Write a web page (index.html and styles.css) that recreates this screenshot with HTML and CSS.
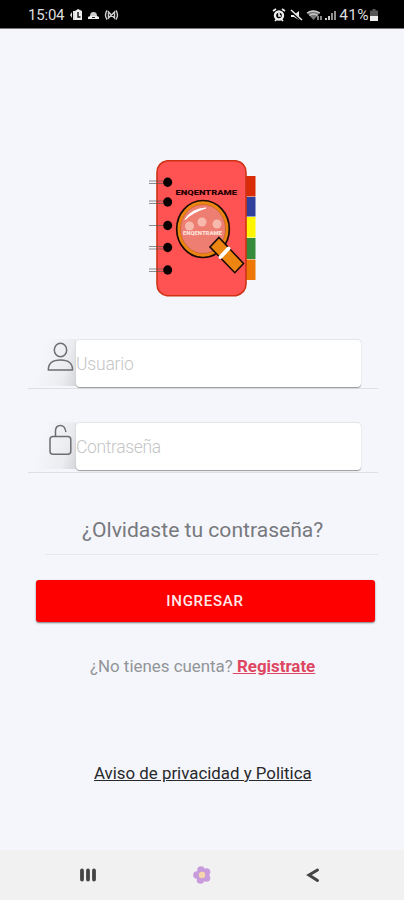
FILE: index.html
```html
<!DOCTYPE html>
<html lang="es">
<head>
<meta charset="utf-8">
<title>Enqentrame</title>
<link rel="stylesheet" href="styles.css">
</head>
<body>
<header class="status">
  <div class="status-left">
    <span class="clock">15:04</span>
    <svg class="status-icons-left" width="50" height="14" viewBox="0 0 50 14">
      <path d="M0 7l2-3v6zM3 3h2v9H3z" fill="#ddd"/>
      <path d="M5 3l3-2 4 2v9H5z" fill="#eee"/>
      <path d="M8 4v5h2.500" fill="none" stroke="#111" stroke-width="1.400"/>
      <path d="M18 11h11V9l-2-1h-7l-2 1z" fill="#eee"/>
      <path d="M20 8a3.500 4 0 0 1 7 0z" fill="#ccc"/>
      <path d="M22 9.500h3" stroke="#222"/>
      <path d="M37 2.500q-3 4.500 0 9M46 2.500q3 4.500 0 9M38.500 4v6l6-6v6z" fill="none" stroke="#ccc" stroke-width="1.400"/>
    </svg>
  </div>
  <div class="status-right">
    <svg width="64" height="14" viewBox="0 0 64 14">
      <circle cx="7" cy="7.500" r="4" fill="none" stroke="#eee" stroke-width="2.400"/>
      <path d="M1 3l3-2M10 1l3 2M3 13l2-2M9 11l2 2M7 5v3h2" stroke="#eee" stroke-width="1.700" fill="none"/>
      <path d="M19 7h3l5-4v9l-5-3h-3z" fill="#eee"/>
      <path d="M18 2l12 11" stroke="#000" stroke-width="2.500"/><path d="M19 2l11 10" stroke="#eee" stroke-width="1.500"/>
      <path d="M35 5q6-5 13 0l-6.500 7z" fill="#777"/>
      <path d="M35 5q6-4 13 0M37.500 7.500q4-3 8 0" fill="none" stroke="#ccc" stroke-width="1.300"/>
      <path d="M46 8v4M49 8v4" stroke="#ccc" stroke-width="1.300"/>
      <path d="M54 12v-2M57 12V8" stroke="#eee" stroke-width="1.700"/><path d="M60 12V5M63 12V3" stroke="#aaa" stroke-width="1.700"/>
    </svg>
    <span class="percent">41%</span>
    <svg width="8" height="12" viewBox="0 0 8 12"><path d="M2.500 0h3v1.500H8V12H0V1.500h2.500z" fill="#555"/><path d="M0 7h8v5H0z" fill="#eee"/></svg>
  </div>
</header>
<main class="screen">
  <svg class="logo" width="125" height="155" viewBox="140 150 125 155">
    <g>
      <path d="M244 176h11.500v20.500H244z" fill="#d92b06"/>
      <path d="M244 197h11.500v19.500H244z" fill="#30409d"/>
      <path d="M244 217h11.500v20.500H244z" fill="#fff500"/>
      <path d="M244 238h11.500v21H244z" fill="#368a3b"/>
      <path d="M244 259.500h11.500V280H244z" fill="#ed7808"/>
    </g>
    <path d="M167 160.700h69q10 2 10 12v111q0 9-10 12h-69q-10-2-10-12v-111q0-10 10-12z" fill="#ff5353" stroke="#cf3215" stroke-width="1.600"/>
    <path d="M149 181h16M149 183.500h16M149 201h16M149 203.500h16M149 225.500h16M149 246.500h16M149 249h16M149 269h16M149 271.500h16" stroke="#555" stroke-opacity=".65" stroke-width="1"/>
    <g fill="#080000"><ellipse cx="167.700" cy="182.300" rx="4.500" ry="4.700"/><ellipse cx="167.700" cy="202" rx="4.500" ry="4.700"/><ellipse cx="167.700" cy="225.500" rx="4.500" ry="4.700"/><ellipse cx="167.700" cy="247.500" rx="4.500" ry="4.700"/><ellipse cx="167.700" cy="270" rx="4.500" ry="4.700"/></g>
    <text class="logo-title" x="175.500" y="195" textLength="61.500" lengthAdjust="spacingAndGlyphs">ENQENTRAME</text>
    <ellipse cx="203" cy="229" rx="26.300" ry="28.500" fill="#ed8611" stroke="#1c0b05" stroke-width="1.700"/>
    <ellipse cx="203" cy="229" rx="22.500" ry="24.500" fill="#ee7d72" stroke="#b85a20" stroke-width=".6"/>
    <g fill="#f8b9ad"><circle cx="189.500" cy="226" r="4.500"/><circle cx="202" cy="222" r="4.500"/><circle cx="217" cy="224" r="4.500"/></g>
    <text class="logo-caption" x="183" y="234.500" textLength="39" lengthAdjust="spacingAndGlyphs">ENQENTRAME</text>
    <path d="M185 219.500Q191 209 206 208Q193 212 185 219.500z" fill="#fff" stroke="#fff" stroke-width="1"/>
    <path d="M219 237.500l24.500 26-8.700 9.200L210 247z" fill="#ed8611" stroke="#1c0b05" stroke-width="1.600"/>
    <path d="M228.500 248.500l-8 8.500" stroke="#fff" stroke-width="4" stroke-linecap="round"/>
  </svg>
  <form class="login">
    <div class="field">
      <svg class="field-icon" width="48" height="47" viewBox="28 340 48 47">
        <g fill="none" stroke="#6c6e71" stroke-width="1.500"><ellipse cx="60.500" cy="351" rx="6.200" ry="6.800"/><path d="M48.300 371q0-10 12.200-10t12 10z" stroke-linejoin="round"/></g>
      </svg>
      <div class="box"><span class="usuario">Usuario</span></div>
    </div>
    <div class="field password">
      <svg class="field-icon" width="48" height="47" viewBox="28 423 48 47">
        <g fill="none" stroke="#6c6e71" stroke-width="1.500"><rect x="50" y="437.500" width="20.800" height="17.700" rx="3"/><path d="M55.500 437v-5q0-5.500 5-5.500 4.300 0 5.300 6" stroke-linecap="round"/></g>
      </svg>
      <div class="box"><span class="contrasena">Contraseña</span></div>
    </div>
  </form>
  <div class="forgot"><span>¿Olvidaste tu contraseña?</span></div>
  <div class="submit"><span>INGRESAR</span></div>
  <p class="register">¿No tienes cuenta?<a> Registrate</a></p>
  <p class="privacy"><a>Aviso de privacidad y Politica</a></p>
</main>
<nav class="navbar">
  <svg width="18" height="14" viewBox="0 0 18 14"><path d="M3 2.500v9M9 2.500v9M15 2.500v9" stroke="#444" stroke-width="3.800" stroke-linecap="round"/></svg>
  <svg width="20" height="20" viewBox="0 0 20 20"><g fill="#c79bdc"><circle cx="9" cy="5" r="3.800"/><circle cx="14.500" cy="7" r="3.800"/><circle cx="14.500" cy="13" r="3.800"/><circle cx="8.500" cy="15" r="3.800"/><circle cx="5" cy="10" r="3.800"/></g><circle cx="10" cy="10" r="3.200" fill="#f6d5ac"/></svg>
  <svg width="14" height="16" viewBox="0 0 14 16"><path d="M11.500 3L3 8l8.500 5.500" fill="none" stroke="#444" stroke-width="3" stroke-linecap="round"/></svg>
</nav>
</body>
</html>
```
FILE: styles.css
```css
* { box-sizing: border-box; }
body { margin: 0; width: 404px; height: 900px; display: flex; flex-direction: column; overflow: hidden; background: #f4f6fb; font-family: Roboto, sans-serif; }
.status { height: 29px; flex: none; padding: 2px 26px 0 28px; background: #000; border-bottom: 1px solid #777; color: #ddd; display: flex; justify-content: space-between; align-items: center; font-size: 15px; }
.status-left, .status-right { display: flex; align-items: center; }
.status-left { gap: 6px; }
.clock { letter-spacing: -.2px; }
.status-right { gap: 3px; }
.percent { font-size: 15.5px; letter-spacing: .3px; margin-right: -2px; }
.screen { flex: 1; display: flex; flex-direction: column; }
.logo { flex: none; margin: 121px 0 0 140px; }
.logo-title { font: 900 8px Roboto, sans-serif; fill: #260000; }
.logo-caption { font: 900 5px Roboto, sans-serif; fill: #ffe3dc; }
.login { margin: 34px 26px 0 28px; }
.field { display: flex; height: 50px; border-bottom: 1px solid #dedfe3; }
.password { margin-top: 33px; height: 51px; }
.field-icon { flex: none; background: linear-gradient(105deg, transparent 30%, #ebecef 75%, #d5d6d9); }
.box { width: 285px; height: 48px; display: flex; align-items: center; background: #fff; border-radius: 4px; border-top: 1px solid #e4e5e8; box-shadow: 0 1px 1px #999; color: #c5c5c5; font-size: 17.5px; font-weight: 300; }
.usuario { letter-spacing: -.2px; }
.contrasena { letter-spacing: -.35px; }
.forgot { margin: 30px 26px 0 45px; height: 52px; border-bottom: 1px solid #e5e7eb; padding: 14px 0 0 37px; color: #77797d; font-size: 21.1px; line-height: 25px; white-space: nowrap; }
.submit { margin: 25px 29.5px 0 35.5px; height: 42px; border-radius: 3px; background: #f00; box-shadow: 0 1px 2px #777; display: flex; align-items: center; justify-content: center; color: #ffe9e9; font-size: 15px; font-weight: 500; letter-spacing: .75px; }
.register { margin: 33px 0 0 90px; color: #929498; font-size: 16.9px; line-height: 22px; white-space: nowrap; }
.register a { color: #df4662; font-weight: 700; text-decoration: underline; }
.privacy { margin: 85px 0 0 94px; color: #28292c; font-size: 16.85px; line-height: 22px; white-space: nowrap; }
.privacy a { text-decoration: underline; }
.navbar { height: 50px; flex: none; background: #f1f1f1; display: flex; align-items: center; padding: 0 84px 0 79px; justify-content: space-between; }
```
